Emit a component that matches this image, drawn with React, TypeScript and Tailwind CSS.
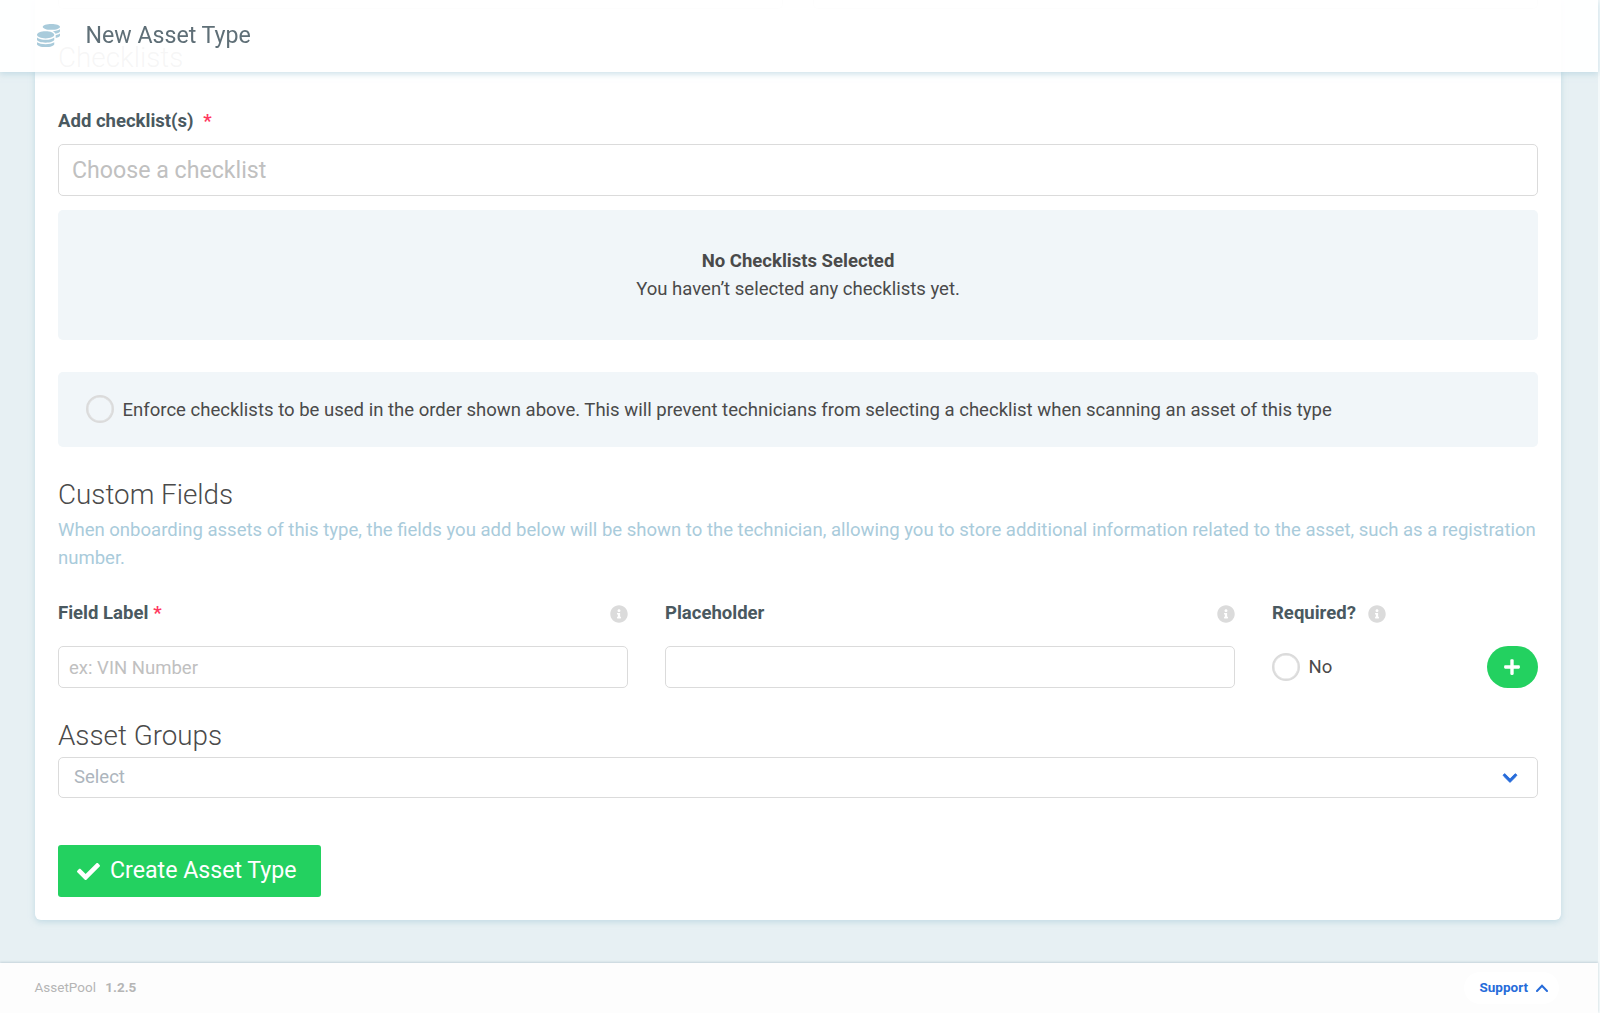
import type { ReactNode } from 'react';
import { FaCheck, FaChevronDown, FaCoins, FaInfoCircle, FaPlus } from 'react-icons/fa';

const Required = () => <span className="ml-[5px] text-[#ff3860]">*</span>;

const InfoIcon = () => <FaInfoCircle className="mt-px text-[#dbdbdb]" size={18} />;

const Label = ({ children }: { children: ReactNode }) => (
  <label className="text-[18.54px] leading-7 font-bold text-[#4a5960]">{children}</label>
);

const RadioCircle = () => (
  <span className="-mt-px block h-7 w-7 shrink-0 rounded-full border-2 border-[#dbdbdb] ring-[0.5px] ring-[#dbdbdb] ring-inset" />
);

const Header = () => (
  <header className="fixed top-0 left-0 z-10 flex h-[72px] w-[1598px] items-center bg-white/95 pl-[37px] shadow-[0_2px_6px_#a9cbdb99]">
    <FaCoins className="-mt-px text-[#a9cbdb]" size={23} />
    <h1 className="ml-[25.5px] text-[23.17px] leading-none text-[#5f6f77]">New Asset Type</h1>
  </header>
);

const Footer = () => (
  <footer className="flex h-[50px] items-center justify-between bg-[#fdfdfd] pr-[39px] pb-px pl-[34.5px] text-[13.5px] shadow-[0_-1px_2px_#c5d3da]">
    <p className="text-[#b5b5b5]">
      AssetPool <span className="ml-1.5 font-bold">1.2.5</span>
    </p>
    <button className="flex h-8 items-center gap-2 rounded-full bg-white pr-[11px] pl-[15px] font-bold text-[#276cda]">
      Support
      <svg width="12" height="8" viewBox="0 0 12 8" fill="none" stroke="currentColor" strokeWidth="2">
        <path d="M1 7l5-5.2L11 7" strokeLinecap="round" />
      </svg>
    </button>
  </footer>
);

const App = () => {
  return (
    <div className="h-[1013px] overflow-hidden bg-[#f4f9fa] font-['Roboto',sans-serif] text-[#4a4a4a]">
      <Header />
      <div className="flex h-full w-[1598px] flex-col bg-[#e7f0f3]">
        <main className="h-[963px] pr-[37px] pl-[34.5px]">
          <form className="flex h-[920px] flex-col rounded-b-md bg-white pr-[23px] pl-[23.5px] shadow-[0_2px_6px_#a9cbdb99]">
            <div className="flex h-[9px] shrink-0 gap-[30px]">
              <div className="flex-1 rounded-b-[5px] border border-t-0 border-[#dbdbdb]" />
              <div className="flex-1 rounded-b-[5px] border border-t-0 border-[#dbdbdb]" />
            </div>
            <h2 className="mt-[33px] text-[27.8px] leading-[32px] font-light">Checklists</h2>

            <div className="mt-[33px] flex h-7 items-center">
              <Label>
                Add checklist(s) <Required />
              </Label>
            </div>
            <input
              className="mt-[9px] h-[52px] shrink-0 rounded-[5px] border border-[#dbdbdb] px-[13px] pt-px text-[23.17px] placeholder:text-[#c0c0c0]"
              placeholder="Choose a checklist"
            />

            <div className="mt-[14px] h-[130px] shrink-0 rounded-[5px] bg-[#f1f6f9] pt-[37px] text-center text-[18.54px] leading-7">
              <p className="font-bold">No Checklists Selected</p>
              <p>You haven’t selected any checklists yet.</p>
            </div>

            <div className="mt-8 flex h-[75px] shrink-0 items-center gap-[8.5px] rounded-[5px] bg-[#f1f6f9] px-7 text-[18.54px]">
              <RadioCircle />
              <span className="pt-[3px]">
                Enforce checklists to be used in the order shown above. This will prevent technicians from selecting a
                checklist when scanning an asset of this type
              </span>
            </div>

            <h2 className="mt-[32px] text-[27.8px] leading-[32px] font-light">Custom Fields</h2>
            <p className="mt-[5px] text-[18.54px] leading-7 text-[#a9cbdb]">
              When onboarding assets of this type, the fields you add below will be shown to the technician, allowing
              you to store additional information related to the asset, such as a registration number.
            </p>

            <div className="mt-[27px] grid shrink-0 grid-cols-[570px_570px_1fr] gap-x-[37px]">
              <div>
                <div className="flex items-center justify-between">
                  <Label>
                    Field Label<Required />
                  </Label>
                  <InfoIcon />
                </div>
                <input
                  className="mt-[19px] h-[42px] w-full rounded-[5px] border border-[#dbdbdb] px-[10px] pt-px text-[18.54px] placeholder:text-[#c0c0c0]"
                  placeholder="ex: VIN Number"
                />
              </div>
              <div>
                <div className="flex items-center justify-between">
                  <Label>Placeholder</Label>
                  <InfoIcon />
                </div>
                <input className="mt-[19px] h-[42px] w-full rounded-[5px] border border-[#dbdbdb] px-[10px] text-[18.54px]" />
              </div>
              <div>
                <div className="flex items-center gap-3">
                  <Label>Required?</Label>
                  <InfoIcon />
                </div>
                <div className="mt-[19px] flex h-[42px] items-center gap-[8.5px] text-[18.54px]">
                  <RadioCircle />
                  <span className="pt-[2px]">No</span>
                  <button className="ml-auto flex h-[42px] w-[51.5px] items-center justify-center rounded-full bg-[#23d160] pr-px text-white">
                    <FaPlus size={18} />
                  </button>
                </div>
              </div>
            </div>

            <h2 className="mt-[32px] text-[27.8px] leading-[32px] font-light">Asset Groups</h2>
            <div className="mt-[5px] flex h-[41px] shrink-0 items-center justify-between rounded-[5px] border border-[#dbdbdb] pr-[19px] pl-[15px] text-[18.54px] text-[#adb5bd]">
              <span className="pt-px">Select</span>
              <FaChevronDown className="text-[#276cda]" size={16} stroke="currentColor" strokeWidth={30} />
            </div>

            <button className="mt-[47px] flex h-[52px] w-[263px] shrink-0 items-center gap-[10px] rounded-[3px] bg-[#23d160] pl-[19px] text-[23.17px] text-white">
              <FaCheck size={23} />
              <span className="pt-px">Create Asset Type</span>
            </button>
          </form>
        </main>
        <Footer />
      </div>
    </div>
  );
};

export default App;
